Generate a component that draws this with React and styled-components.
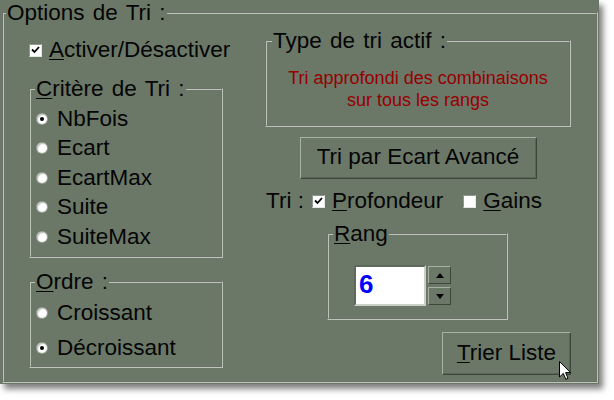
import React from "react";
import styled, { createGlobalStyle } from "styled-components";

const BG = "#6b7868";
const LIGHT = "#bcc4b9";
const DARK = "#3d463b";

const Global = createGlobalStyle`
  html, body { margin: 0; padding: 0; background: #ffffff; }
  body { font-family: "Liberation Sans", Arial, sans-serif; }
  *, *::before, *::after { box-sizing: border-box; }
`;

const Page = styled.div`
  width: 614px;
  height: 400px;
`;

const Window = styled.div`
  position: relative;
  width: 599px;
  height: 384px;
  background: ${BG};
  box-shadow: 4px 5px 6px rgba(0, 0, 0, 0.5);
  display: flex;
  flex-direction: column;
  padding: 0 1px 1px 2px;
  font-family: "Liberation Sans", Arial, sans-serif;
  font-size: 22.5px;
  color: #050505;
`;

const Group = styled.fieldset`
  margin: 0;
  padding: 0;
  min-width: 0;
  border: 2px groove ${LIGHT};
  flex: ${(p) => (p.$fill ? 1 : "none")};
  width: ${(p) => (p.$width ? `${p.$width}px` : "auto")};
`;

const Legend = styled.legend`
  padding: 0 1px;
  margin-left: ${(p) => p.$indent}px;
  line-height: 26px;
  font-size: 22.5px;
  word-spacing: 2px;
`;

const Key = styled.span`
  text-decoration: underline;
  text-decoration-thickness: 1px;
  text-underline-offset: 2px;
`;

const Columns = styled.div`
  display: grid;
  grid-template-columns: 194px 306px;
  column-gap: 42px;
  padding: 0 25px;
  align-items: start;
`;

const LeftCol = styled.div`
  display: flex;
  flex-direction: column;
  padding-top: 11px;
`;

const RightCol = styled.div`
  display: flex;
  flex-direction: column;
  padding-top: 2px;
`;

const CheckRow = styled.label`
  display: flex;
  align-items: center;
  height: 26px;
  gap: 7px;
  white-space: nowrap;
`;

const Box = styled.span`
  width: 13px;
  height: 13px;
  flex: none;
  background: #ffffff;
  border: 1px solid;
  border-color: #8e978b #e4e8e2 #e4e8e2 #8e978b;
  display: flex;
  align-items: center;
  justify-content: center;
`;

const Check = ({ checked }) => (
  <Box>
    {checked && (
      <svg width="9" height="8" viewBox="0 0 9 8">
        <path d="M1 3.5 L3.5 6 L8 1" fill="none" stroke="#000" strokeWidth="1.8" />
      </svg>
    )}
  </Box>
);

const OptionList = styled.div`
  display: flex;
  flex-direction: column;
  padding: ${(p) => p.$pad};
`;

const RadioRow = styled.label`
  display: flex;
  align-items: center;
  height: ${(p) => p.$h}px;
  gap: 10px;
  white-space: nowrap;
`;

const RadioDot = styled.span`
  width: 10px;
  height: 10px;
  flex: none;
  border-radius: 50%;
  background: #ffffff;
  box-shadow: 0 0 0 1px #9aa397, inset 1px 1px 1px #b8bfb5;
  display: flex;
  align-items: center;
  justify-content: center;
  &::after {
    content: "";
    width: 4px;
    height: 4px;
    border-radius: 50%;
    background: ${(p) => (p.$on ? "#000" : "transparent")};
  }
`;

const Radio = ({ on, h, children }) => (
  <RadioRow $h={h}>
    <RadioDot $on={on} />
    <span>{children}</span>
  </RadioRow>
);

const StatusText = styled.div`
  padding: 13px 0 14px;
  text-align: center;
  color: #960000;
  font-size: 18px;
  line-height: 22px;
`;

const Button = styled.button`
  font-family: "Liberation Sans", Arial, sans-serif;
  font-size: 22.5px;
  color: #050505;
  background: ${BG};
  width: ${(p) => p.$w}px;
  height: ${(p) => p.$h}px;
  margin-top: ${(p) => p.$mt}px;
  align-self: ${(p) => p.$align};
  padding: 0 0 2px;
  border: 1px solid;
  border-color: #a8b1a5 ${DARK} ${DARK} #a8b1a5;
  box-shadow: inset -1px -1px 0 #5a6557;
`;

const TriRow = styled.div`
  display: flex;
  align-items: center;
  height: 26px;
  margin-top: 9px;
  padding-left: 1px;
  white-space: nowrap;
`;

const TriLabel = styled.span`
  margin-right: 8px;
`;

const SecondCheck = styled(CheckRow)`
  margin-left: 20px;
`;

const RangWrap = styled.div`
  margin-top: 7px;
  margin-left: 62px;
`;

const RangBody = styled.div`
  display: flex;
  align-items: flex-start;
  padding: 18px 0 12px 25px;
`;

const NumberInput = styled.div`
  width: 72px;
  height: 41px;
  background: #ffffff;
  border: 2px solid;
  border-color: #5e685b #c9d0c6 #c9d0c6 #5e685b;
  color: #0000ff;
  font-weight: bold;
  font-size: 26px;
  line-height: 34px;
  padding-left: 3px;
`;

const Spinner = styled.div`
  display: flex;
  flex-direction: column;
  gap: 3px;
  margin-left: 2px;
  padding-top: 1px;
`;

const SpinButton = styled.div`
  width: 23px;
  height: 18px;
  background: ${BG};
  border: 1px solid;
  border-color: #a8b1a5 ${DARK} ${DARK} #a8b1a5;
  display: flex;
  align-items: center;
  justify-content: center;
`;

const Cursor = styled.svg`
  position: absolute;
  left: 559px;
  top: 361px;
`;

export default function App() {
  return (
    <Page>
      <Global />
      <Window>
        <Group $fill>
          <Legend $indent={2}>Options de Tri :</Legend>
          <Columns>
            <LeftCol>
              <CheckRow>
                <Check checked />
                <span>
                  <Key>A</Key>ctiver/Désactiver
                </span>
              </CheckRow>
              <Group style={{ marginTop: 13 }}>
                <Legend $indent={4}>
                  <Key>C</Key>ritère de Tri :
                </Legend>
                <OptionList $pad="2px 0 4.5px 6px">
                  <Radio h={29.5} on>NbFois</Radio>
                  <Radio h={29.5}>Ecart</Radio>
                  <Radio h={29.5}>EcartMax</Radio>
                  <Radio h={29.5}>Suite</Radio>
                  <Radio h={29.5}>SuiteMax</Radio>
                </OptionList>
              </Group>
              <Group style={{ marginTop: 11 }}>
                <Legend $indent={4}>
                  <Key>O</Key>rdre :
                </Legend>
                <OptionList $pad="0 0 1px 6px">
                  <Radio h={35}>Croissant</Radio>
                  <Radio h={35} on>Décroissant</Radio>
                </OptionList>
              </Group>
            </LeftCol>
            <RightCol>
              <Group>
                <Legend $indent={5}>Type de tri actif :</Legend>
                <StatusText>
                  Tri approfondi des combinaisons
                  <br />
                  sur tous les rangs
                </StatusText>
              </Group>
              <Button $w={237} $h={42} $mt={10} $align="center">
                Tri par Ecart Avancé
              </Button>
              <TriRow>
                <TriLabel>Tri :</TriLabel>
                <CheckRow>
                  <Check checked />
                  <span>
                    <Key>P</Key>rofondeur
                  </span>
                </CheckRow>
                <SecondCheck>
                  <Check />
                  <span>
                    <Key>G</Key>ains
                  </span>
                </SecondCheck>
              </TriRow>
              <RangWrap>
                <Group $width={181}>
                  <Legend $indent={4}>
                    <Key>R</Key>ang
                  </Legend>
                  <RangBody>
                    <NumberInput>6</NumberInput>
                    <Spinner>
                      <SpinButton>
                        <svg width="8" height="5" viewBox="0 0 8 5">
                          <path d="M0 5 L4 0 L8 5 Z" fill="#000" />
                        </svg>
                      </SpinButton>
                      <SpinButton>
                        <svg width="8" height="5" viewBox="0 0 8 5">
                          <path d="M0 0 L8 0 L4 5 Z" fill="#000" />
                        </svg>
                      </SpinButton>
                    </Spinner>
                  </RangBody>
                </Group>
              </RangWrap>
              <Button $w={129} $h={43} $mt={12} $align="flex-end">
                <Key>T</Key>rier Liste
              </Button>
            </RightCol>
          </Columns>
        </Group>
        <Cursor width="13" height="20" viewBox="0 0 13 20">
          <path
            d="M0.5 0.5 L0.5 16 L4.3 12.4 L6.8 18.3 L9 17.3 L6.6 11.6 L11.5 11.6 Z"
            fill="#fff"
            stroke="#000"
            strokeWidth="1"
            strokeLinejoin="round"
          />
        </Cursor>
      </Window>
    </Page>
  );
}
